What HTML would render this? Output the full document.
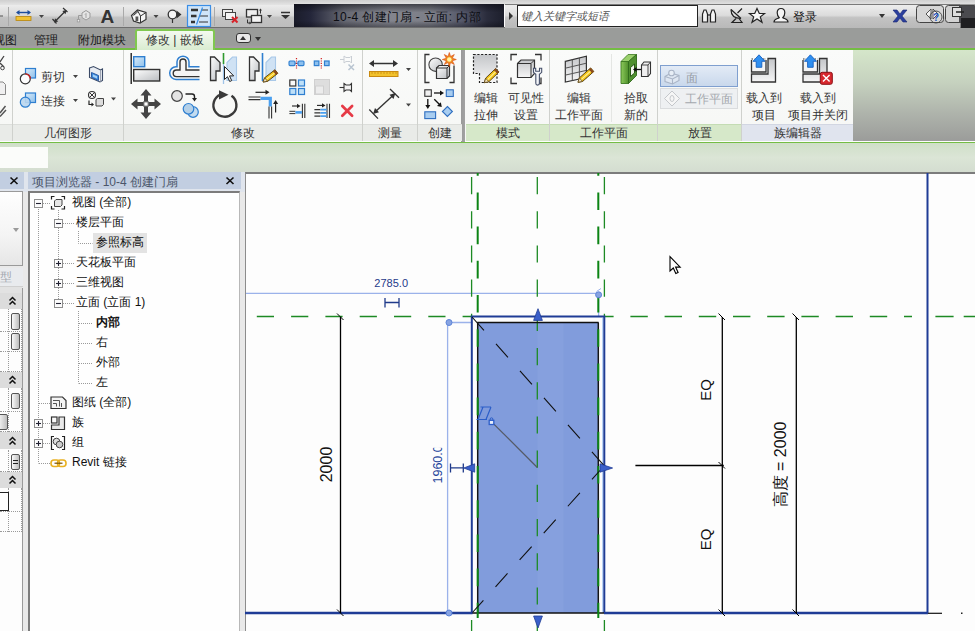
<!DOCTYPE html>
<html lang="zh">
<head>
<meta charset="utf-8">
<title>Revit</title>
<style>
*{box-sizing:border-box;margin:0;padding:0}
html,body{width:975px;height:631px;overflow:hidden;background:#fdfdfd}
body{font-family:"Liberation Sans",sans-serif;font-size:12px;color:#222;position:relative}
.abs{position:absolute}
#root{position:absolute;left:0;top:0;width:975px;height:631px;overflow:hidden;background:#fdfdfd}
/* top bars */
#topstrip{left:0;top:0;width:975px;height:5px;background:linear-gradient(#cfcfcf,#e4e4e4)}
#qat{left:0;top:5px;width:295px;height:23px;background:linear-gradient(#ececec,#d9d9d9 45%,#c2c2c2 55%,#bdbdbd)}
#titledark{left:294px;top:4px;width:210px;height:24px;background:linear-gradient(rgba(10,10,16,.55),rgba(0,0,0,0) 35%,rgba(0,0,0,0) 70%,rgba(10,10,16,.45)),linear-gradient(90deg,#1a1c2a,#24263a 8%,#666872 24%,#83858e 45%,#7c7e87 65%,#55586a 80%,#2a2c3c 92%,#1d1f2c)}
#titleright{left:508px;top:4px;width:467px;height:24px;background:linear-gradient(#9a9a9a,#7d7d7d)}
#tabrow{left:0;top:27px;width:975px;height:22px;background:linear-gradient(#6e6e6e 0,#6e6e6e 1px,#9a9c9a 1px,#9a9c9a 18px,#a69aa6 20px)}
#greenline{left:0;top:47.500px;width:975px;height:2px;background:#74bd45}
/* ribbon */
#ribbon{left:0;top:50px;width:975px;height:91px;background:linear-gradient(#fafbfa,#f6f7f5)}
#ribbonline{left:0;top:141.500px;width:975px;height:2px;background:#74bd45}
#optbar{left:0;top:143px;width:975px;height:29px;background:linear-gradient(#cfdfc8,#dbe5d6 50%,#d4ddd0)}
.plabel{position:absolute;top:124px;height:17px;line-height:17px;text-align:center;font-size:12px;color:#333;background:#e9ebe8;border-top:1px solid #dcdedb}
.plabel.ctx{background:#d6e8c9;border-top:1px solid #c4dcb4}
.psep{position:absolute;top:50px;width:1px;height:91px;background:#cfd1cd}
.t{position:absolute;white-space:nowrap}

.plabel.fam{background:#e0e4ee;border-top:1px solid #d2d6e2}
.tab{font-size:12px;color:#1a1a1a}
#acttab{left:135px;top:29px;width:80px;height:21px;background:linear-gradient(#f3f9ef,#e6f2df 55%,#d9ecd0);border:2px solid #80c850;border-bottom:none;border-radius:3px 3px 0 0}
.tri-dn{width:0;height:0;border-top:4px solid #333;border-left:3.5px solid transparent;border-right:3.5px solid transparent}
.tri-up{width:0;height:0;border-bottom:4px solid #333;border-left:3.5px solid transparent;border-right:3.5px solid transparent}
.rb{font-size:12px;color:#333}
.rb2{font-size:12px;color:#333;text-align:center;line-height:16.5px;white-space:nowrap}
.ls .c{margin-right:.42px}
.c{display:inline-block;width:1em;text-align:center}
</style>
</head>
<body>
<div id="root">
<div id="topstrip" class="abs"></div>
<div id="qat" class="abs"></div>
<div id="titledark" class="abs"></div>
<div id="titleright" class="abs"></div>
<div id="tabrow" class="abs"></div>
<div id="greenline" class="abs"></div>
<div id="ribbon" class="abs"></div>
<div id="ribbonline" class="abs"></div>
<div id="optbar" class="abs"></div>
<!-- ribbon right empty area -->
<div class="abs" style="left:853px;top:50px;width:122px;height:91px;background:linear-gradient(#d5e6ca,#c6d2bf 35%,#aeb3ab 70%,#9b9c9a)"></div>
<!-- contextual green tint in panels -->
<div class="abs" style="left:461px;top:50px;width:4px;height:92px;background:linear-gradient(90deg,#9a9a9a,#a2a2a2)"></div>
<!-- panel label rows -->
<div class="plabel" style="left:0;width:12px"></div>
<div class="plabel" style="left:13px;width:110px"><span class="c">几</span><span class="c">何</span><span class="c">图</span><span class="c">形</span></div>
<div class="plabel" style="left:124px;width:238px"><span class="c">修</span><span class="c">改</span></div>
<div class="plabel" style="left:363px;width:54px"><span class="c">测</span><span class="c">量</span></div>
<div class="plabel" style="left:418px;width:44px"><span class="c">创</span><span class="c">建</span></div>
<div class="plabel ctx" style="left:466px;width:83px"><span class="c">模</span><span class="c">式</span></div>
<div class="plabel ctx" style="left:550px;width:107px"><span class="c">工</span><span class="c">作</span><span class="c">平</span><span class="c">面</span></div>
<div class="plabel ctx" style="left:658px;width:83px"><span class="c">放</span><span class="c">置</span></div>
<div class="plabel fam" style="left:742px;width:111px"><span class="c">族</span><span class="c">编</span><span class="c">辑</span><span class="c">器</span></div>
<!-- separators -->
<div class="psep" style="left:12px"></div>
<div class="psep" style="left:123px"></div>
<div class="psep" style="left:362px"></div>
<div class="psep" style="left:417px"></div>
<div class="psep" style="left:549px"></div>
<div class="psep" style="left:657px"></div>
<div class="psep" style="left:741px"></div>
<!-- tabs -->
<div class="t tab" style="left:-7px;top:32px"><span class="c">视</span><span class="c">图</span></div>
<div class="t tab" style="left:34px;top:32px"><span class="c">管</span><span class="c">理</span></div>
<div class="t tab" style="left:78px;top:32px"><span class="c">附</span><span class="c">加</span><span class="c">模</span><span class="c">块</span></div>
<div class="abs" id="acttab"></div>
<div class="t tab" style="left:146px;top:32px;color:#333"><span class="c">修</span><span class="c">改</span> | <span class="c">嵌</span><span class="c">板</span></div>
<!-- small dropdown in tab row -->
<div class="abs" style="left:236px;top:33px;width:15px;height:10px;border:1px solid #333;border-radius:3px;background:#e8e8e8"></div>
<div class="abs tri-up" style="left:240px;top:36px"></div>
<div class="abs tri-dn" style="left:255px;top:37px"></div>
<!-- title text -->
<div class="t ls" style="left:333px;top:9px;font-size:12px;letter-spacing:0.42px;color:#0c0d12">10-4 <span class="c">创</span><span class="c">建</span><span class="c">门</span><span class="c">扇</span> - <span class="c">立</span><span class="c">面</span>: <span class="c">内</span><span class="c">部</span></div>
<!-- info center -->
<div class="abs" style="left:505px;top:4px;width:455px;height:24px;background:linear-gradient(#ededed,#dcdcdc 45%,#c3c3c3 55%,#b9b9b9);border-top:1px solid #7a7a7a"></div>

<div class="abs" style="left:517px;top:5px;width:181px;height:22px;background:#fff;border:1px solid #222"></div>
<div class="t" style="left:521px;top:9px;font-size:11px;color:#555;font-style:italic"><span class="c">键</span><span class="c">入</span><span class="c">关</span><span class="c">键</span><span class="c">字</span><span class="c">或</span><span class="c">短</span><span class="c">语</span></div>
<div class="abs" style="left:509px;top:12px;width:0;height:0;border-left:4px solid #333;border-top:4px solid transparent;border-bottom:4px solid transparent"></div>
<div class="t" style="left:793px;top:9px;font-size:12px;color:#111"><span class="c">登</span><span class="c">录</span></div>
<div class="abs tri-dn" style="left:879px;top:14px"></div>
<!-- ribbon button texts -->
<div class="t rb" style="left:41px;top:69px"><span class="c">剪</span><span class="c">切</span></div>
<div class="t rb" style="left:41px;top:93px"><span class="c">连</span><span class="c">接</span></div>
<div class="t rb2" style="left:466px;top:90px;width:40px"><span class="c">编</span><span class="c">辑</span><br><span class="c">拉</span><span class="c">伸</span></div>
<div class="t rb2" style="left:501px;top:90px;width:50px"><span class="c">可</span><span class="c">见</span><span class="c">性</span><br><span class="c">设</span><span class="c">置</span></div>
<div class="t rb2" style="left:549px;top:90px;width:60px"><span class="c">编</span><span class="c">辑</span><br><span class="c">工</span><span class="c">作</span><span class="c">平</span><span class="c">面</span></div>
<div class="t rb2" style="left:611px;top:90px;width:50px"><span class="c">拾</span><span class="c">取</span><br><span class="c">新</span><span class="c">的</span></div>
<div class="abs" style="left:660px;top:65px;width:78px;height:22px;border:1px solid #7f9fcf;background:linear-gradient(#e3ebf6,#c9d8ec)"></div>
<div class="abs" style="left:660px;top:88px;width:78px;height:21px;border:1px solid #dadcde;background:#eef0f2"></div>
<div class="t rb" style="left:686px;top:70px;color:#9aa0a8"><span class="c">面</span></div>
<div class="t rb" style="left:685px;top:91px;color:#a4a8ae"><span class="c">工</span><span class="c">作</span><span class="c">平</span><span class="c">面</span></div>
<div class="t rb2" style="left:734px;top:90px;width:60px"><span class="c">载</span><span class="c">入</span><span class="c">到</span><br><span class="c">项</span><span class="c">目</span></div>
<div class="t rb2" style="left:783px;top:90px;width:70px"><span class="c">载</span><span class="c">入</span><span class="c">到</span><br><span class="c">项</span><span class="c">目</span><span class="c">并</span><span class="c">关</span><span class="c">闭</span></div>
<!-- options bar input -->
<div class="abs" style="left:0;top:147px;width:48px;height:21px;background:#fbfcfa"></div>

<svg class="abs" style="left:0;top:0" width="975" height="145" viewBox="0 0 975 145">
<defs>
<linearGradient id="gbox" x1="0" y1="0" x2="1" y2="1"><stop offset="0" stop-color="#fff"/><stop offset="1" stop-color="#b9bcc0"/></linearGradient>
<linearGradient id="gblue" x1="0" y1="0" x2="1" y2="1"><stop offset="0" stop-color="#d7ebfa"/><stop offset="1" stop-color="#8fc0ea"/></linearGradient>
<linearGradient id="ggreen" x1="0" y1="0" x2="1" y2="0"><stop offset="0" stop-color="#8cc95a"/><stop offset="1" stop-color="#4d8e2a"/></linearGradient>
<linearGradient id="gbox2" x1="0" y1="0" x2="0" y2="1"><stop offset="0" stop-color="#c4c6c9"/><stop offset="1" stop-color="#f6f6f6"/></linearGradient>
</defs>
<!-- ===== QAT ===== -->
<g fill="none" stroke-linecap="butt">
<line x1="8.5" y1="7" x2="8.5" y2="26" stroke="#a9a9a9"/>
<line x1="123.5" y1="7" x2="123.5" y2="26" stroke="#a9a9a9"/>
<line x1="214.5" y1="7" x2="214.5" y2="26" stroke="#a9a9a9"/>
<path d="M0 16h3" stroke="#555"/>
<!-- measure -->
<rect x="16" y="16.5" width="15" height="4" fill="#f1c232" stroke="#b8860b" stroke-width=".8"/>
<path d="M17 12.5h13" stroke="#1f4e9c" stroke-width="1.4"/>
<path d="M16 12.5l3.5-2.5v5zM31 12.5l-3.5-2.5v5z" fill="#1f4e9c" stroke="none"/>
<path d="M39 15h5l-2.5 3z" fill="#444" stroke="none"/>
<!-- aligned dim -->
<path d="M55 21.5L65.5 11" stroke="#333" stroke-width="1.3"/>
<path d="M54 22.5l1-4.2 3.2 3.2zM66.5 10l-1 4.2-3.2-3.2z" fill="#333" stroke="none"/>
<path d="M52.5 19l4 4.5M63 8l4.500 4" stroke="#333" stroke-width="1.2"/>
<!-- tag -->
<path d="M82 13l4-2.500 4 2.500v4.500l-4 2.500-4-2.500z" stroke="#9b9b9b" fill="#e4e4e4"/>
<path d="M86 13.500v4.500M85 14.500l1-1" stroke="#9b9b9b" stroke-width=".9"/>
<path d="M78.500 20v-4.500h3.500" stroke="#9b9b9b"/>
<rect x="77.300" y="19.500" width="2.400" height="2.400" fill="#eee" stroke="#9b9b9b" stroke-width=".8"/>
<!-- house -->
<path d="M131.500 15.500l6-5.500 8.500 2.500v7l-6 3.500-6.500-2z" fill="#f6f6f6" stroke="#333" stroke-width="1.200"/>
<path d="M133.500 15.500l4.500-4 0 0M137.500 10.500l3 5.500v6.500M140.500 16l5.500-3.500" stroke="#333" stroke-width="1"/>
<rect x="135.500" y="16.500" width="2.800" height="4.500" fill="#555" stroke="none"/>
<path d="M153.500 15h5l-2.500 3z" fill="#444" stroke="none"/>
<!-- circle arrow -->
<circle cx="172.500" cy="14.500" r="4.300" fill="#f4f4f4" stroke="#333" stroke-width="1.300"/>
<path d="M176.500 10.500l5 4-5 4z" fill="#333" stroke="none"/>
<path d="M172.500 19v4" stroke="#333" stroke-width="1.200"/>
<!-- thin lines highlighted -->
<rect x="187.500" y="5.500" width="23" height="21" fill="#cfe4f8" stroke="#3a8ee6" stroke-width="1.200"/>
<path d="M191 10h7M191 16h5.500M191 22h4" stroke="#333" stroke-width="2.400"/>
<path d="M201 10h7M200 16h8M199 22h9" stroke="#333" stroke-width="1"/>
<path d="M202.500 7.500l-6 17" stroke="#3a8ee6" stroke-width="1.200"/>
<!-- close hidden -->
<rect x="222.500" y="9.500" width="10" height="7" fill="#eee" stroke="#444"/>
<rect x="225.500" y="12.500" width="10" height="7" fill="#f4f4f4" stroke="#444"/>
<path d="M232 17l5.500 5.500M237.500 17l-5.500 5.500" stroke="#d8232a" stroke-width="2"/>
<!-- switch windows -->
<rect x="246.500" y="9.500" width="11" height="7.500" fill="#eee" stroke="#333" stroke-width="1.300"/>
<rect x="251.500" y="15.500" width="10" height="7" fill="#f4f4f4" stroke="#333" stroke-width="1.300"/>
<path d="M260.500 9.500v4M247.500 19.500v3.500h2.500" stroke="#333" stroke-width="1"/>
<path d="M259 10.500l1.500-2 1.500 2zM249.500 21.500l2 1.500-2 1.500z" fill="#333" stroke="none"/>
<path d="M267 15h5l-2.500 3z" fill="#444" stroke="none"/>
<!-- customize -->
<path d="M281 12.500h9" stroke="#333" stroke-width="1.500"/>
<path d="M281 15h9l-4.500 4z" fill="#333" stroke="none"/>
</g>
<text x="100.500" y="23" font-family="Liberation Sans, sans-serif" font-size="19" font-weight="bold" fill="#333">A</text>
<!-- ===== info center icons ===== -->
<g fill="none" stroke="#222" stroke-width="1.200">
<!-- binoculars -->
<path d="M702.500 22v-8l1.500-4h2l1.500 4v8zM710.500 22v-8l1.500-4h2l1.500 4v8z" fill="#f4f4f4"/>
<path d="M707.500 15h3" />
<!-- satellite -->
<path d="M731 9.500c0 6 4 9 10 9" /><path d="M731 9.500l10 9M737.500 13l4.500-4.500M736 18.500l-4 4h10l-3-4" />
<!-- star -->
<path d="M757 8.500l2.300 5h5.200l-4.200 3.400 1.700 5.300-5-3.300-5 3.300 1.700-5.300-4.200-3.400h5.200z" fill="#f6f6f6"/>
<!-- person -->
<path d="M781 8.500c2.500 0 3.800 1.800 3.800 4.200s-1.300 4.300-2 5c2 1.200 5.200 1.300 5.200 4.300h-14c0-3 3.200-3.100 5.200-4.300-.7-.7-2-2.600-2-5s1.300-4.200 3.800-4.200z" fill="#f4f4f4"/>
</g>
<!-- X exchange icon -->
<path d="M893 10h4l3 4 3-4h4l-5 6 5 6h-4l-3-4-3 4h-4l5-6z" fill="#2b3f9e" stroke="#1a2770" stroke-width=".6"/>
<!-- help buttons -->
<rect x="916.500" y="5.500" width="27" height="17" rx="3" fill="#d6d6d6" stroke="#444"/>
<path d="M926 14l5-5v10zM938 14l-5-5v10z" fill="#f4f4f4" stroke="#444" stroke-width=".9"/>
<circle cx="936" cy="17" r="6" fill="none" stroke="#444" stroke-width=".9"/>
<text x="933" y="21" font-family="Liberation Sans, sans-serif" font-size="10" font-weight="bold" fill="#1f55c0">?</text>
<rect x="945.500" y="5.500" width="32" height="17" rx="3" fill="#d2d2d2" stroke="#444"/><rect x="959" y="6" width="16" height="16" fill="#4a4a4e"/><rect x="961" y="18" width="14" height="10" fill="#1e1e20"/>
<rect x="952.500" y="7.500" width="9" height="9" fill="#ddd" stroke="#333"/>
<path d="M956 12h8" stroke="#222" stroke-width="1.500"/>
<!-- ===== left partial panel ===== -->
<g fill="none" stroke="#444" stroke-width="1.300">
<path d="M0 62l4-6M0 63l4 4" /><circle cx="2.500" cy="68" r="1.800" stroke-width="1"/>
<path d="M0 82h3l2.500 2.500v10h-5.500" fill="#f0f0f0" stroke="#888" stroke-width="1"/>
<path d="M0 113l5.500-7M0 116.500l6-6.500" stroke="#555" stroke-width="1.500"/>
</g>
<!-- ===== 几何图形 ===== -->
<rect x="25.500" y="68.500" width="10" height="9.500" fill="url(#gblue)" stroke="#2f7fd0" stroke-width="1.200"/>
<circle cx="25.300" cy="78.800" r="5" fill="#fdfdfd" stroke="#333" stroke-width="1.200"/>
<path d="M25.300 73.800a5 5 0 0 1 5 5" fill="none" stroke="#d02020" stroke-width="1.300"/>
<rect x="25.500" y="93" width="10" height="9.500" fill="url(#gblue)" stroke="#2f7fd0" stroke-width="1.200"/>
<circle cx="25.300" cy="102.200" r="5" fill="#b9d6ee" fill-opacity=".9" stroke="#2f7fd0" stroke-width="1.200"/>
<path d="M73 75h5l-2.500 3zM73 99h5l-2.500 3zM111 97.500h5l-2.500 3z" fill="#444"/>
<!-- wall opening -->
<path d="M89.500 68l4-1.500 7 3.500 2-1v11.500l-2.500 1.500-10.500-4.500z" fill="#e8ecf2" stroke="#3b4a66" stroke-width="1.100"/>
<path d="M91.500 72.500l7 3v5l-7-3z" fill="#3f8fe0" stroke="#1f4f9c" stroke-width=".9"/>
<path d="M93 74.500l4 1.700v2.200l-4-1.700z" fill="#a8d0f4"/>
<path d="M100.500 70v12" stroke="#8a93a3" stroke-width=".8"/>
<!-- split face -->
<circle cx="92" cy="95" r="3.500" fill="#fafafa" stroke="#333" stroke-width="1.100"/>
<path d="M89.700 92.700l4.600 4.600M94.300 92.700l-4.600 4.600" stroke="#333" stroke-width="1"/>
<path d="M96 99.500l1.500-1h6v6l-1.500 1.500h-6z" fill="#ddd" stroke="#444" stroke-width="1"/>
<path d="M89 100.500v4h3" fill="none" stroke="#222" stroke-width="1.200"/><path d="M91.500 102.500l2.500 2-2.500 2z" fill="#222"/>
<!-- ===== 修改 big icons ===== -->
<!-- align -->
<path d="M131.200 53v31" stroke="#111" stroke-width="1.300"/>
<rect x="133.700" y="56.700" width="11" height="10" fill="url(#gblue)" stroke="#2f7fd0" stroke-width="1.400"/>
<rect x="133.700" y="69.500" width="26" height="11.500" fill="url(#gbox)" stroke="#333" stroke-width="1.400"/>
<!-- offset -->
<path d="M199.500 66.800h-10.500v-5a6 5.500 0 0 0-12 0v5h-1a6.300 6.300 0 0 0 0 12.600h23.500" fill="none" stroke="#2f7fd0" stroke-width="1.500"/>
<path d="M199.500 70h-13.500v-8a3 3 0 0 0-6 0v8h-3.500a3.300 3.300 0 0 0 0 6.600h23" fill="#f4f4f4" stroke="#333" stroke-width="1.400"/>
<!-- mirror pick -->
<path d="M210.500 57h4l5.500 5.500v8.500h-4v9.500h-5.500z" fill="url(#gbox)" stroke="#333" stroke-width="1.300"/>
<path d="M223.500 53v11" stroke="#2f9a2f" stroke-width="1.600"/><path d="M223.500 64v20" stroke="#9fc4e8" stroke-width="1.300"/>
<path d="M236.500 57h-4l-5.500 5.500v18h9.500z" fill="#cfe2f4" stroke="#a8c8e8" stroke-width="1.100"/>
<path d="M224.500 66.500v13l3-2.800 2.200 4.800 2-.9-2.200-4.700h4.200z" fill="#fff" stroke="#222" stroke-width="1"/>
<!-- mirror draw -->
<path d="M249.500 57h4l5.500 5.500v8.500h-4v9.500h-5.500z" fill="url(#gbox)" stroke="#333" stroke-width="1.300"/>
<path d="M262.500 53v28" stroke="#2f7fd0" stroke-width="1.600"/>
<path d="M275.500 57h-4l-5.500 5.500v18h9.500z" fill="#cfe2f4" stroke="#a8c8e8" stroke-width="1.100"/>
<g transform="translate(263,82) rotate(-38)"><path d="M0 0l4-2.300h13v4.600h-13z" fill="#f5c518" stroke="#5a4210" stroke-width=".9"/><path d="M0 0l4-2.300v4.600z" fill="#f3e3c0" stroke="#5a4210" stroke-width=".7"/><path d="M14.500-2.300h2.500v4.600h-2.500z" fill="#8b4a1c"/><path d="M4.500 0h10" stroke="#fff3a0" stroke-width="1"/></g>
<!-- move -->
<g fill="#444" stroke="none"><path d="M146 89l5.500 6.500h-3.500v6h-4v-6h-3.500zM146 119l5.500-6.500h-3.500v-6h-4v6h-3.500zM131 104l6.500-5.500v3.500h6v4h-6v3.500zM161 104l-6.500-5.500v3.500h-6v4h6v3.500z"/></g>
<rect x="143.800" y="101.800" width="4.400" height="4.400" fill="#fff" stroke="#444" stroke-width="1"/>
<!-- copy -->
<circle cx="177" cy="96" r="5.300" fill="#e4e4e4" stroke="#444" stroke-width="1.200"/>
<path d="M185.500 94h6.500a2.500 2.500 0 0 1 2.500 2.500v2" fill="none" stroke="#222" stroke-width="1.400"/><path d="M192 98h5l-2.500 3.500z" fill="#222"/>
<circle cx="193" cy="112" r="5.300" fill="#c4dcf0" stroke="#2f7fd0" stroke-width="1.200"/>
<circle cx="188.500" cy="108.800" r="5.300" fill="#b4d0e8" stroke="#2f7fd0" stroke-width="1.200"/>
<!-- rotate -->
<path d="M231.500 95.800a11.500 11.500 0 1 1 -11 -1.200" fill="none" stroke="#3a3a3a" stroke-width="2.400"/>
<path d="M219 90.200l9.500 4.600-9.500 4.800z" fill="#3a3a3a"/>
<!-- trim corner -->
<path d="M255.500 92.300h11" stroke="#222" stroke-width="1.200"/><path d="M265.500 89.800l4 2.500-4 2.500z" fill="#222"/>
<path d="M248.500 97h12M248.500 99.600h12" stroke="#333" stroke-width="1.100"/>
<path d="M260.500 98.300h9.800v8.200" fill="none" stroke="#4aa0f0" stroke-width="3.200"/>
<path d="M269 106.500v12M271.600 106.500v12" stroke="#333" stroke-width="1.100"/>
<path d="M275.600 112.500v-9" stroke="#222" stroke-width="1.200"/><path d="M273.100 104l2.500-4 2.500 4z" fill="#222"/>
<!-- ===== 修改 small icons ===== -->
<!-- split -->
<rect x="289" y="61" width="6" height="4.600" rx="1" fill="#8cc0ee" stroke="#2f7fd0" stroke-width="1.100"/><rect x="298" y="61" width="6" height="4.600" rx="1" fill="#8cc0ee" stroke="#2f7fd0" stroke-width="1.100"/>
<path d="M295 63.300h3" stroke="#2f7fd0" stroke-width="1"/>
<path d="M296.500 58v10.500" stroke="#d02020" stroke-width="1.200" stroke-dasharray="1.200 1.200"/>
<rect x="314.300" y="61" width="4.600" height="4.600" fill="#8cc0ee" stroke="#2f7fd0" stroke-width="1.200"/><rect x="324.500" y="61" width="4.600" height="4.600" fill="#8cc0ee" stroke="#2f7fd0" stroke-width="1.200"/>
<path d="M321.300 58v10.500" stroke="#d02020" stroke-width="1.200" stroke-dasharray="1.200 1.200"/>
<!-- unpin disabled -->
<g fill="none" stroke="#c9ced4" stroke-width="1"><path d="M340 59.500h4M344 56l2 1.500h4l1.500-1.500v7l-1.500-1.500h-4l-2 1.500z" /><path d="M348.500 64.500l5.500 5.500M354 64.500l-5.500 5.500" stroke="#b8c4d0" stroke-width="1.500"/></g>
<!-- array -->
<rect x="289.800" y="80" width="6" height="6" fill="#fafafa" stroke="#333" stroke-width="1.200"/>
<rect x="298.500" y="80" width="6" height="6" fill="#bfe0f8" stroke="#2f7fd0" stroke-width="1.200"/>
<rect x="289.800" y="88.500" width="6" height="6" fill="#bfe0f8" stroke="#2f7fd0" stroke-width="1.200"/>
<rect x="298.500" y="88.500" width="6" height="6" fill="#bfe0f8" stroke="#2f7fd0" stroke-width="1.200"/>
<!-- scale disabled -->
<rect x="314.500" y="79.500" width="15" height="15" fill="#dedede" stroke="#d0d0d0"/><rect x="315.500" y="86" width="8" height="8" fill="#ececec" stroke="#cfcfcf"/>
<!-- pin -->
<path d="M339.500 87.500h4.500" stroke="#333" stroke-width="1.100"/><path d="M344 83.500l2 1.500h4l1.500-1.500v8l-1.500-1.500h-4l-2 1.500z" fill="#f4f4f4" stroke="#333" stroke-width="1.100"/>
<!-- trim single -->
<path d="M292 106h6" stroke="#222" stroke-width="1.100"/><path d="M297 103.800l3.500 2.200-3.500 2.200z" fill="#222"/>
<path d="M302.400 103.800v14.200M304.800 103.800v14.200" stroke="#333" stroke-width="1.100"/>
<path d="M289.400 111.300h6M289.400 113.600h6" stroke="#333" stroke-width="1"/><path d="M295.400 112.400h6.500" stroke="#4aa0f0" stroke-width="2.600"/>
<!-- trim multiple -->
<path d="M317 105.400h6" stroke="#222" stroke-width="1.100"/><path d="M322 103.200l3.500 2.200-3.500 2.200z" fill="#222"/>
<path d="M327 103.800v14.200M329.500 103.800v14.200" stroke="#333" stroke-width="1.100"/>
<path d="M314.400 109.700h6M314.400 112.900h6M314.400 116.100h6" stroke="#333" stroke-width="1.300"/><path d="M320.400 109.700h6.200M320.400 112.900h6.200M320.400 116.100h6.200" stroke="#4aa0f0" stroke-width="1.700"/>
<!-- delete -->
<path d="M342.300 106l9.800 9.800M352.100 106l-9.800 9.800" stroke="#e63a46" stroke-width="2.700" stroke-linecap="round"/>
<!-- ===== 测量 ===== -->
<path d="M372 63.500h23" stroke="#333" stroke-width="1.500"/><path d="M369 63.500l5-3.500v7zM398 63.500l-5-3.500v7z" fill="#333"/>
<rect x="369.500" y="71.500" width="28.500" height="5" fill="#f2c22c" stroke="#c98a10" stroke-width="1"/>
<path d="M372 72v2M375 72v2M378 72v2M381 72v2M384 72v2M387 72v2M390 72v2M393 72v2M396 72v2" stroke="#c98a10" stroke-width=".8"/>
<path d="M406 68h5l-2.500 3zM406 103.500h5l-2.500 3z" fill="#444"/>
<path d="M375 112l18.500-17" stroke="#333" stroke-width="1.400"/><path d="M373 114l2-6 4 4.300zM395.500 93l-2 6-4-4.300z" fill="#333"/>
<path d="M369.300 109.500l8.700 9.100M390 89l9 8.700" stroke="#333" stroke-width="1.300"/>
<!-- ===== 创建 ===== -->
<path d="M429.500 54.500h-4.500v28h4.500M449.500 82.500h4.500v-17" fill="none" stroke="#333" stroke-width="1.300"/>
<circle cx="435.600" cy="64.700" r="6.700" fill="url(#gbox)" stroke="#444" stroke-width="1.100"/>
<path d="M436.500 68l2.500-2.500h10.500v10.500l-2.500 2.500h-10.500z" fill="url(#gbox)" stroke="#333" stroke-width="1.200"/><path d="M436.500 68h10.500v10.500M447 68l2.500-2.500" fill="none" stroke="#333" stroke-width="1"/>
<path d="M449.300 52.500l1.300 4 3.700-2-2 3.700 4 1.300-4 1.300 2 3.700-3.700-2-1.300 4-1.300-4-3.700 2 2-3.700-4-1.300 4-1.300-2-3.700 3.700 2z" fill="#f08a1c" stroke="#d84a10" stroke-width=".6"/><circle cx="449.300" cy="59.500" r="2.300" fill="#fff7a0"/>
<rect x="424.800" y="89.800" width="6.500" height="6.500" fill="#f0f0f0" stroke="#333" stroke-width="1.100"/>
<path d="M434 93h7" stroke="#111" stroke-width="1.300"/><path d="M440 90.500l4 2.500-4 2.500z" fill="#111"/>
<rect x="446.300" y="89.800" width="7" height="6.700" fill="#a8cdf0" stroke="#2f6fc0" stroke-width="1.100"/>
<path d="M427.800 99v7" stroke="#111" stroke-width="1.300"/><path d="M425.300 105l2.500 4 2.500-4z" fill="#111"/>
<path d="M434.300 99.300l5 5" stroke="#111" stroke-width="1.300"/><path d="M441.800 107l-1-4.800-3.800 3.800z" fill="#111"/>
<rect x="424.800" y="111.800" width="10.800" height="6.800" fill="#a8cdf0" stroke="#2f6fc0" stroke-width="1.100"/>
<path d="M447.400 106.500l5 5-5 5-5-5z" fill="#a8cdf0" stroke="#2f6fc0" stroke-width="1.100"/>
<!-- ===== 模式 ===== -->
<path d="M473.500 54.500h23.500v28h-17.500v-9h-6z" fill="url(#gbox2)" stroke="#222" stroke-width="1.200" stroke-dasharray="2.200 1.600"/>
<g transform="translate(484.400,82.700) rotate(-44)"><path d="M0 0l4-2.400h14v4.800h-14z" fill="#f5c518" stroke="#5a4210" stroke-width=".9"/><path d="M0 0l4-2.400v4.800z" fill="#f3e3c0" stroke="#5a4210" stroke-width=".7"/><path d="M15.500-2.400h2.500v4.800h-2.500z" fill="#8b4a1c"/><path d="M4.500 0h11" stroke="#fff3a0" stroke-width="1"/></g>
<path d="M517 54.500h-6v6M535 54.500h6v6M511 77.500v6h6M541 77.500v6h-3" fill="none" stroke="#333" stroke-width="1.300"/>
<path d="M517.500 63.500l3.500-3.500h13.500v13.500l-3.500 4h-13.500z" fill="url(#gbox2)" stroke="#333" stroke-width="1.200"/><path d="M517.500 63.500h13.500v14M531 63.500l3.500-3.500" fill="none" stroke="#333" stroke-width="1"/>
<path d="M533.500 68.300v4l2.300 2v9a1.800 1.800 0 0 0 3.600 0v-9l2.300-2v-4h-2.200v3h-3.800v-3z" fill="#f2f4f8" stroke="#46506a" stroke-width="1.100"/>
<!-- ===== 工作平面 ===== -->
<path d="M565.300 61.300l21.100-5.100v21.400l-21.100 4.400z" fill="url(#gbox2)" stroke="#333" stroke-width="1.200"/>
<path d="M572.300 59.600v20.900M579.400 57.900v21.100M565.300 68.200l21.100-5M565.300 75.100l21.100-4.700" fill="none" stroke="#555" stroke-width="1"/>
<g transform="translate(578,82.300) rotate(-41.500)"><path d="M0 0l4-2.400h15v4.800h-15z" fill="#f5c518" stroke="#5a4210" stroke-width=".9"/><path d="M0 0l4-2.400v4.800z" fill="#f3e3c0" stroke="#5a4210" stroke-width=".7"/><path d="M16.500-2.400h2.500v4.800h-2.500z" fill="#8b4a1c"/><path d="M4.500 0h12" stroke="#fff3a0" stroke-width="1"/></g>
<path d="M611.500 54v68" stroke="#e4e6e3" stroke-width="1"/>
<path d="M621 61.500l7-7h8.500l-7.500 7z" fill="#9ad06c" stroke="#3d7a22" stroke-width=".8"/>
<path d="M621 61.500h7.500v22h-7.500z" fill="url(#ggreen)" stroke="#3d7a22" stroke-width=".9"/>
<path d="M628.500 61.500l8-7v21l-8 8z" fill="#4f9030" stroke="#2f6a1a" stroke-width=".9"/>
<path d="M630.500 67.500l4-3.500v9l-4 3.500z" fill="#f2f6ee" stroke="#2a5a18" stroke-width="1"/>
<path d="M641 69.500h-6" stroke="#111" stroke-width="1.300"/><path d="M636.500 67l-3.500 2.500 3.500 2.500z" fill="#111"/>
<path d="M641.500 65l2.500-3h6.500v11.500l-2.500 3h-6.500z" fill="#f0f0f0" stroke="#333" stroke-width="1.100"/><path d="M641.500 65h6.500v11.500M648 65l2.500-3" fill="none" stroke="#333" stroke-width=".9"/>
<!-- ===== 放置 icons ===== -->
<g fill="none" stroke="#a9b4c6" stroke-width="1.100"><path d="M665 76.500l6-3.500 8 2.500v5l-6.500 3.500-7.500-2.500z" fill="#dfe7f2"/><path d="M665 76.500l7.500 2.500 6.500-3.500M672.500 79v5"/><circle cx="671.500" cy="73" r="2.800" fill="#e8eef6"/></g>
<g fill="none" stroke="#c4c7cb" stroke-width="1"><path d="M672 91l7.500 7.500-7.500 7.500-7.500-7.500z" fill="#f6f6f6"/><ellipse cx="672" cy="98.500" rx="2" ry="3"/></g>
<!-- ===== 族编辑器 ===== -->
<path d="M768 58.500h7.500v23.500h-24v-8h16.500z" fill="url(#gbox2)" stroke="#333" stroke-width="1.300"/>
<path d="M751.500 60v12h14.500v-12" fill="#f4f4f4" stroke="#333" stroke-width="1.300"/><path d="M751.500 59h3M763 59h3" stroke="#333" stroke-width="1.200" stroke-dasharray="1.500 1.200"/>
<path d="M759 54.800l6 6.500h-3.200v6h-5.600v-6h-3.200z" fill="#2f8ff0" stroke="#1560c0" stroke-width=".9"/>
<path d="M819.500 58.500h7.500v23.500h-24v-8h16.500z" fill="url(#gbox2)" stroke="#333" stroke-width="1.300"/>
<path d="M803 60v12h14.500v-12" fill="#f4f4f4" stroke="#333" stroke-width="1.300"/><path d="M803 59h3M814.500 59h3" stroke="#333" stroke-width="1.200" stroke-dasharray="1.500 1.200"/>
<path d="M810.400 54.800l6 6.500h-3.200v6h-5.600v-6h-3.200z" fill="#2f8ff0" stroke="#1560c0" stroke-width=".9"/>
<rect x="820.300" y="72.300" width="12" height="12" rx="1.800" fill="#d8282e" stroke="#8a1014" stroke-width="1"/>
<path d="M823 75l6.600 6.600M829.600 75l-6.600 6.600" stroke="#fff" stroke-width="1.400"/>

</svg>

<!-- ===== left strip bg ===== -->
<div class="abs" style="left:0;top:172px;width:245px;height:459px;background:#e9e9e9"></div>
<div class="abs" style="left:0;top:172px;width:245px;height:20px;background:#e0e5ed"></div>
<div class="abs" style="left:0;top:172px;width:24px;height:17px;background:#c2cee1"></div>
<div class="abs" style="left:28px;top:172px;width:213px;height:17px;background:#c2cee1"></div>
<div class="t" style="left:32px;top:174px;font-size:12px;color:#4b566a"><span class="c">项</span><span class="c">目</span><span class="c">浏</span><span class="c">览</span><span class="c">器</span> - 10-4 <span class="c">创</span><span class="c">建</span><span class="c">门</span><span class="c">扇</span></div>
<svg class="abs" style="left:0;top:172px" width="245" height="20"><path d="M10.500 5.500l7 6.500M17.500 5.500l-7 6.500M226.500 5.500l7 6.500M233.500 5.500l-7 6.500" stroke="#111" stroke-width="1.600" fill="none"/></svg>
<div class="abs" style="left:-2px;top:191px;width:25px;height:75px;border:1px solid #9a9a9a;background:linear-gradient(#fefefe,#f4f4f4 60%,#e6e6e6)"></div>
<div class="abs" style="left:13px;top:228px;width:0;height:0;border-top:4px solid #9a9a9a;border-left:3.500px solid transparent;border-right:3.500px solid transparent"></div>
<div class="abs" style="left:0;top:268px;width:23px;height:19px;background:#e9ebee;border-bottom:1px solid #d0d0d0"></div>
<div class="t" style="left:-12px;top:269px;font-size:12px;color:#a4a8b0;text-decoration:underline"><span class="c">类</span><span class="c">型</span></div>
<div class="abs" style="left:0;top:288px;width:23px;height:343px;background:#fdfdfd;border-right:1px solid #9a9a9a"></div>
<div class="abs" style="left:0;top:287px;width:22px;height:7px;background:#e2e2e2"></div>
<div class="abs" style="left:0;top:293px;width:22px;height:16px;background:#dcdcdc"></div>
<svg class="abs" style="left:8px;top:296.0px" width="10" height="10"><path d="M1.500 4.500l3-3 3 3M1.500 8.500l3-3 3 3" stroke="#111" stroke-width="1.500" fill="none"/></svg>
<div class="abs" style="left:0;top:372px;width:22px;height:16px;background:#dcdcdc"></div>
<svg class="abs" style="left:8px;top:375.0px" width="10" height="10"><path d="M1.500 4.500l3-3 3 3M1.500 8.500l3-3 3 3" stroke="#111" stroke-width="1.500" fill="none"/></svg>
<div class="abs" style="left:0;top:432px;width:22px;height:17px;background:#dcdcdc"></div>
<svg class="abs" style="left:8px;top:435.5px" width="10" height="10"><path d="M1.500 4.500l3-3 3 3M1.500 8.500l3-3 3 3" stroke="#111" stroke-width="1.500" fill="none"/></svg>
<div class="abs" style="left:0;top:472px;width:22px;height:16px;background:#dcdcdc"></div>
<svg class="abs" style="left:8px;top:475.0px" width="10" height="10"><path d="M1.500 4.500l3-3 3 3M1.500 8.500l3-3 3 3" stroke="#111" stroke-width="1.500" fill="none"/></svg>
<div class="abs" style="left:0;top:331px;width:22px;height:0;border-top:1px dotted #9a9a9a"></div>
<div class="abs" style="left:0;top:351px;width:22px;height:0;border-top:1px dotted #9a9a9a"></div>
<div class="abs" style="left:0;top:371px;width:22px;height:0;border-top:1px dotted #9a9a9a"></div>
<div class="abs" style="left:0;top:411px;width:22px;height:0;border-top:1px dotted #9a9a9a"></div>
<div class="abs" style="left:0;top:431px;width:22px;height:0;border-top:1px dotted #9a9a9a"></div>
<div class="abs" style="left:0;top:471px;width:22px;height:0;border-top:1px dotted #9a9a9a"></div>
<div class="abs" style="left:0;top:511px;width:22px;height:0;border-top:1px dotted #9a9a9a"></div>
<div class="abs" style="left:0;top:531px;width:22px;height:0;border-top:1px dotted #9a9a9a"></div>
<div class="abs" style="left:8px;top:309px;width:0;height:63px;border-left:1px dotted #9a9a9a"></div>
<div class="abs" style="left:21px;top:309px;width:0;height:63px;border-left:1px dotted #9a9a9a"></div>
<div class="abs" style="left:8px;top:388px;width:0;height:44px;border-left:1px dotted #9a9a9a"></div>
<div class="abs" style="left:21px;top:388px;width:0;height:44px;border-left:1px dotted #9a9a9a"></div>
<div class="abs" style="left:8px;top:450px;width:0;height:22px;border-left:1px dotted #9a9a9a"></div>
<div class="abs" style="left:21px;top:450px;width:0;height:22px;border-left:1px dotted #9a9a9a"></div>
<div class="abs" style="left:8px;top:488px;width:0;height:44px;border-left:1px dotted #9a9a9a"></div>
<div class="abs" style="left:21px;top:488px;width:0;height:44px;border-left:1px dotted #9a9a9a"></div>
<div class="abs" style="left:11px;top:313px;width:9px;height:17px;border:1px solid #555;border-radius:2px;background:linear-gradient(90deg,#fafafa,#d6d6d6 60%,#bdbdbd)"></div>
<div class="abs" style="left:11px;top:333px;width:9px;height:17px;border:1px solid #555;border-radius:2px;background:linear-gradient(90deg,#fafafa,#d6d6d6 60%,#bdbdbd)"></div>
<div class="abs" style="left:11px;top:393px;width:9px;height:16px;border:1px solid #555;border-radius:2px;background:linear-gradient(90deg,#fafafa,#d6d6d6 60%,#bdbdbd)"></div>
<div class="abs" style="left:-3px;top:414px;width:11px;height:16px;border:1px solid #555;border-radius:2px;background:linear-gradient(90deg,#fafafa,#d6d6d6 60%,#bdbdbd)"></div>
<div class="abs" style="left:11px;top:454px;width:9px;height:16px;border:1px solid #555;border-radius:2px;background:linear-gradient(90deg,#fafafa,#d6d6d6 60%,#bdbdbd)"></div>
<div class="abs" style="left:13px;top:460px;width:5px;height:4px;border-top:1px solid #222;border-bottom:1px solid #222"></div>
<div class="abs" style="left:-2px;top:492px;width:11px;height:19px;border:1.500px solid #222;background:#fff"></div>
<div class="abs" style="left:28px;top:191px;width:212px;height:442px;background:#fefefe;border:2px solid #7c7c7c;border-right:1px solid #b8b8b8"></div>
<div class="abs" style="left:93px;top:233px;width:54px;height:20px;background:#e3e3e3"></div>
<svg class="abs" style="left:0;top:190px" width="245" height="300" viewBox="0 190 245 300">
<g stroke="#9a9a9a" stroke-width="1" stroke-dasharray="1 1" fill="none">
<path d="M38.500 207v256.500M43 203.500h7M43 423.500h7M43 443.500h7M39 403.500h11M39 463.500h11"/>
<path d="M58.500 210v93M63 223.500h11M63 263.500h11M63 283.500h11M63 303.500h11"/>
<path d="M78.500 231v12.500h14M78.500 311v72.500M79 323.500h14M79 343.500h14M79 363.500h14M79 383.500h14"/>
</g>
<rect x="34.5" y="199.5" width="8" height="8" fill="#fcfcfc" stroke="#8e8e8e" stroke-width="1"/><path d="M36.0 203.5h5" stroke="#223" stroke-width="1.100"/>
<rect x="54.5" y="219.5" width="8" height="8" fill="#fcfcfc" stroke="#8e8e8e" stroke-width="1"/><path d="M56.0 223.5h5" stroke="#223" stroke-width="1.100"/>
<rect x="54.5" y="259.5" width="8" height="8" fill="#fcfcfc" stroke="#8e8e8e" stroke-width="1"/><path d="M56.0 263.5h5" stroke="#223" stroke-width="1.100"/><path d="M58.5 261.0v5" stroke="#223" stroke-width="1.100"/>
<rect x="54.5" y="279.5" width="8" height="8" fill="#fcfcfc" stroke="#8e8e8e" stroke-width="1"/><path d="M56.0 283.5h5" stroke="#223" stroke-width="1.100"/><path d="M58.5 281.0v5" stroke="#223" stroke-width="1.100"/>
<rect x="54.5" y="299.5" width="8" height="8" fill="#fcfcfc" stroke="#8e8e8e" stroke-width="1"/><path d="M56.0 303.5h5" stroke="#223" stroke-width="1.100"/>
<rect x="34.5" y="419.5" width="8" height="8" fill="#fcfcfc" stroke="#8e8e8e" stroke-width="1"/><path d="M36.0 423.5h5" stroke="#223" stroke-width="1.100"/><path d="M38.5 421.0v5" stroke="#223" stroke-width="1.100"/>
<rect x="34.5" y="439.5" width="8" height="8" fill="#fcfcfc" stroke="#8e8e8e" stroke-width="1"/><path d="M36.0 443.5h5" stroke="#223" stroke-width="1.100"/><path d="M38.5 441.0v5" stroke="#223" stroke-width="1.100"/>
<g fill="none" stroke="#222" stroke-width="1.200">
<path d="M54.500 196.500h-3v3M61.500 196.500h3v3M51.500 206v3h3M64.500 206v3h-3"/>
<path d="M54.500 201l1.500-1.500h6v5.500l-1.500 1.500h-6z" fill="#e8e8e8" stroke="#444" stroke-width="1"/>
<path d="M51 397h11.500l3.500 3.500v8h-15z" fill="#f4f4f4" stroke="#333"/><path d="M53 400.500h6.500v6M53 403.500h3.500v3M61.500 403v4" stroke="#555" stroke-width="1"/>
<path d="M59 417h5.500v12.500h-13v-4.500h7.500z" fill="#e8e8e8" stroke="#333"/><rect x="51.500" y="417" width="5.500" height="6" fill="#f8f8f8" stroke="#333"/>
<path d="M54 436.500h-2.500v13h2.500M62 436.500h2.500v13h-2.500" stroke="#222"/><circle cx="56.500" cy="441.500" r="3.300" fill="#ddd" stroke="#444" stroke-width="1"/><circle cx="59.500" cy="444.500" r="3.300" fill="#ccc" stroke="#444" stroke-width="1"/>
<rect x="51" y="460" width="8.500" height="6.500" rx="3" stroke="#e8b020" stroke-width="1.600"/><rect x="57.500" y="460" width="8.500" height="6.500" rx="3" stroke="#e8b020" stroke-width="1.600"/><path d="M54.500 463.200h8" stroke="#7a5200" stroke-width="1.200"/>
</g></svg>
<div class="t" style="left:72px;top:194.2px;font-size:12px;color:#111"><span class="c">视</span><span class="c">图</span> (<span class="c">全</span><span class="c">部</span>)</div>
<div class="t" style="left:76px;top:214.2px;font-size:12px;color:#111"><span class="c">楼</span><span class="c">层</span><span class="c">平</span><span class="c">面</span></div>
<div class="t" style="left:96px;top:234.2px;font-size:12px;color:#111"><span class="c">参</span><span class="c">照</span><span class="c">标</span><span class="c">高</span></div>
<div class="t" style="left:76px;top:254.2px;font-size:12px;color:#111"><span class="c">天</span><span class="c">花</span><span class="c">板</span><span class="c">平</span><span class="c">面</span></div>
<div class="t" style="left:76px;top:274.2px;font-size:12px;color:#111"><span class="c">三</span><span class="c">维</span><span class="c">视</span><span class="c">图</span></div>
<div class="t" style="left:76px;top:294.2px;font-size:12px;color:#111"><span class="c">立</span><span class="c">面</span> (<span class="c">立</span><span class="c">面</span> 1)</div>
<div class="t" style="left:96px;top:314.2px;font-size:12px;color:#111;font-weight:bold"><span class="c">内</span><span class="c">部</span></div>
<div class="t" style="left:96px;top:334.2px;font-size:12px;color:#111"><span class="c">右</span></div>
<div class="t" style="left:96px;top:354.2px;font-size:12px;color:#111"><span class="c">外</span><span class="c">部</span></div>
<div class="t" style="left:96px;top:374.2px;font-size:12px;color:#111"><span class="c">左</span></div>
<div class="t" style="left:72px;top:394.2px;font-size:12px;color:#111"><span class="c">图</span><span class="c">纸</span> (<span class="c">全</span><span class="c">部</span>)</div>
<div class="t" style="left:72px;top:414.2px;font-size:12px;color:#111"><span class="c">族</span></div>
<div class="t" style="left:72px;top:434.2px;font-size:12px;color:#111"><span class="c">组</span></div>
<div class="t" style="left:72px;top:454.2px;font-size:12px;color:#111">Revit <span class="c">链</span><span class="c">接</span></div>
<div class="abs" style="left:245px;top:172px;width:730px;height:459px;background:#fdfdfd;border-left:1.500px solid #8c8c8c;border-top:2px solid #7c7c7c"></div>
<svg class="abs" style="left:0;top:172px" width="975" height="459" viewBox="0 172 975 459" font-family="Liberation Sans, sans-serif">
<!-- door fill -->
<rect x="477.200" y="322.500" width="121.400" height="290.500" fill="#819cdc"/>
<rect x="537.500" y="323" width="26" height="290" fill="#8aa4e0" opacity=".55"/>
<!-- light blue temp dimension lines -->
<g stroke="#9bb2ea" stroke-width="1.300" fill="none">
<path d="M246 293.300h352.600M598.600 295v21.500M447.600 322.500v290.500M449 322.500h23.500"/>
</g>
<!-- green reference planes -->
<g fill="none" stroke="#1d8a24">
<path d="M256.800 316.500H472" stroke-width="1.300" stroke-dasharray="17.200 17.100"/>
<path d="M604.400 316.500H912" stroke-width="1.300" stroke-dasharray="17.400 16.800" stroke-dashoffset="8.200"/>
<path d="M935.400 316.500H953.600M963.700 316.500H975" stroke-width="1.300"/>
<path d="M471.600 177V316" stroke-width="1.300" stroke-dasharray="17.200 17"/>
<path d="M604.400 177V316" stroke-width="1.300" stroke-dasharray="17.200 17"/>
<path d="M537.300 177V631" stroke-width="1.300" stroke-dasharray="17.200 17"/>
<path d="M471.600 620V631M604.400 620V631" stroke-width="1.300"/>
</g>
<!-- door outline -->
<g fill="none">
<path d="M477.200 322.500H598.600" stroke="#111" stroke-width="1.500"/>
<path d="M477.700 322.500V613M598.300 322.500V613" stroke="#151515" stroke-width="1.500"/>
<path d="M602.700 318V613" stroke="#a8c8f4" stroke-width="1"/>
<path d="M471.800 613V316.600H604.300V613" stroke="#1f3c96" stroke-width="2"/>
<path d="M472 613H604" stroke="#111" stroke-width="1.300"/>
</g>
<g fill="none" stroke="#0c8414" stroke-width="2">
<path d="M477.700 173V618" stroke-dasharray="17.600 16.600" stroke-dashoffset="14.800"/>
<path d="M598.300 173V618" stroke-dasharray="17.600 16.600" stroke-dashoffset="14.800"/>
</g>
<!-- swing dashes -->
<g fill="none" stroke="#111" stroke-width="1.100">
<path d="M472 317L604 465.500" stroke-dasharray="18 18.100"/>
<path d="M604 466L472 613" stroke-dasharray="18 18.100"/>
</g>
<path d="M493.600 423.800L537.300 467.500" stroke="#555a66" stroke-width="1.200" fill="none"/>
<!-- lock / align icon -->
<g fill="none" stroke="#2c5ec8" stroke-width="1.200">
<path d="M480.500 407h10.500M476.500 419.500h10.500M483 407l-5 12.500M491 407l-5 12.500"/>
<rect x="489.200" y="420.300" width="4.600" height="4.200" fill="#e8eefc" stroke-width="1.300"/>
<path d="M490.200 420.300v-1.200a1.300 1.300 0 0 1 2.600 0v1.200" stroke-width="1"/>
</g>
<!-- main blue lines -->
<g fill="none" stroke="#1f3c96">
<path d="M245 613H472.500M604 613H928" stroke-width="2.600"/>
<path d="M927.500 173V613" stroke-width="2"/>
</g>
<path d="M928 613.300H942" stroke="#111" stroke-width="1.200"/>
<rect x="961" y="612.500" width="1.500" height="1.500" fill="#222"/>
<!-- handles -->
<g fill="#88a4e2" stroke="#5d84d8" stroke-width="1">
<circle cx="598.600" cy="294.800" r="3"/><circle cx="449" cy="322.500" r="3"/><circle cx="449" cy="613" r="3"/>
</g>
<path d="M596.500 291.500l4.500-3" stroke="#9bb2ea" stroke-width="1" fill="none"/>
<g fill="#3a5fca" stroke="#1f3c96" stroke-width=".8">
<path d="M538 308.700l4.400 11.700h-8.800z"/>
<path d="M538 628l4.400-12h-8.800z"/>
<path d="M463.800 468l10.900-4.200v8.400z"/>
<path d="M612.600 468l-12.600-4.200v8.400z"/>
</g>
<g fill="none" stroke="#1f3a8a" stroke-width="1.300">
<path d="M385 302.500h14M385 298v9.500M399 298v9.500"/>
<path d="M450.500 467.800h13.300M450.500 463.500v9M463.300 463.500v9"/>
</g>
<text x="391.200" y="287" font-size="11" fill="#1f3a8a" text-anchor="middle">2785.0</text>
<text transform="translate(441.700,483.500) rotate(-90)" font-size="12.500" fill="#23439a">1960.0</text>
<rect x="430" y="436" width="14" height="11.800" fill="#fdfdfd"/>
<!-- black dimensions -->
<g fill="none" stroke="#000" stroke-width="1.300">
<path d="M340.500 317V613M722.300 317V613M796.300 317V613"/>
<path d="M635.400 465.500H723.800"/>
<path d="M337 313.500l6.500 6.500M337 609.500l6.500 6.500M718.500 313.500l6.500 6.500M718.500 609.500l6.500 6.500M792.500 313.500l6.500 6.500M792.500 609.500l6.500 6.500M718.500 462l6.500 6.500" stroke-width="1"/>
</g>
<g fill="#111" text-anchor="middle">
<text transform="translate(331.500,464.500) rotate(-90)" font-size="16">2000</text>
<text transform="translate(710.800,390) rotate(-90)" font-size="15">EQ</text>
<text transform="translate(710.800,539.500) rotate(-90)" font-size="15">EQ</text>
<text transform="translate(785.500,464.500) rotate(-90)" font-size="16" text-anchor="start"><tspan x="-42.900">高</tspan><tspan x="-26.900">度</tspan><tspan x="-10.900"> = 2000</tspan></text>
</g>
<!-- mouse cursor -->
<path d="M670 256.500v14.500l3.300-3 2.500 5.500 2.300-1-2.500-5.400h4.600z" fill="#fff" stroke="#000" stroke-width="1.100"/>
</svg>

</div>
</body>
</html>
